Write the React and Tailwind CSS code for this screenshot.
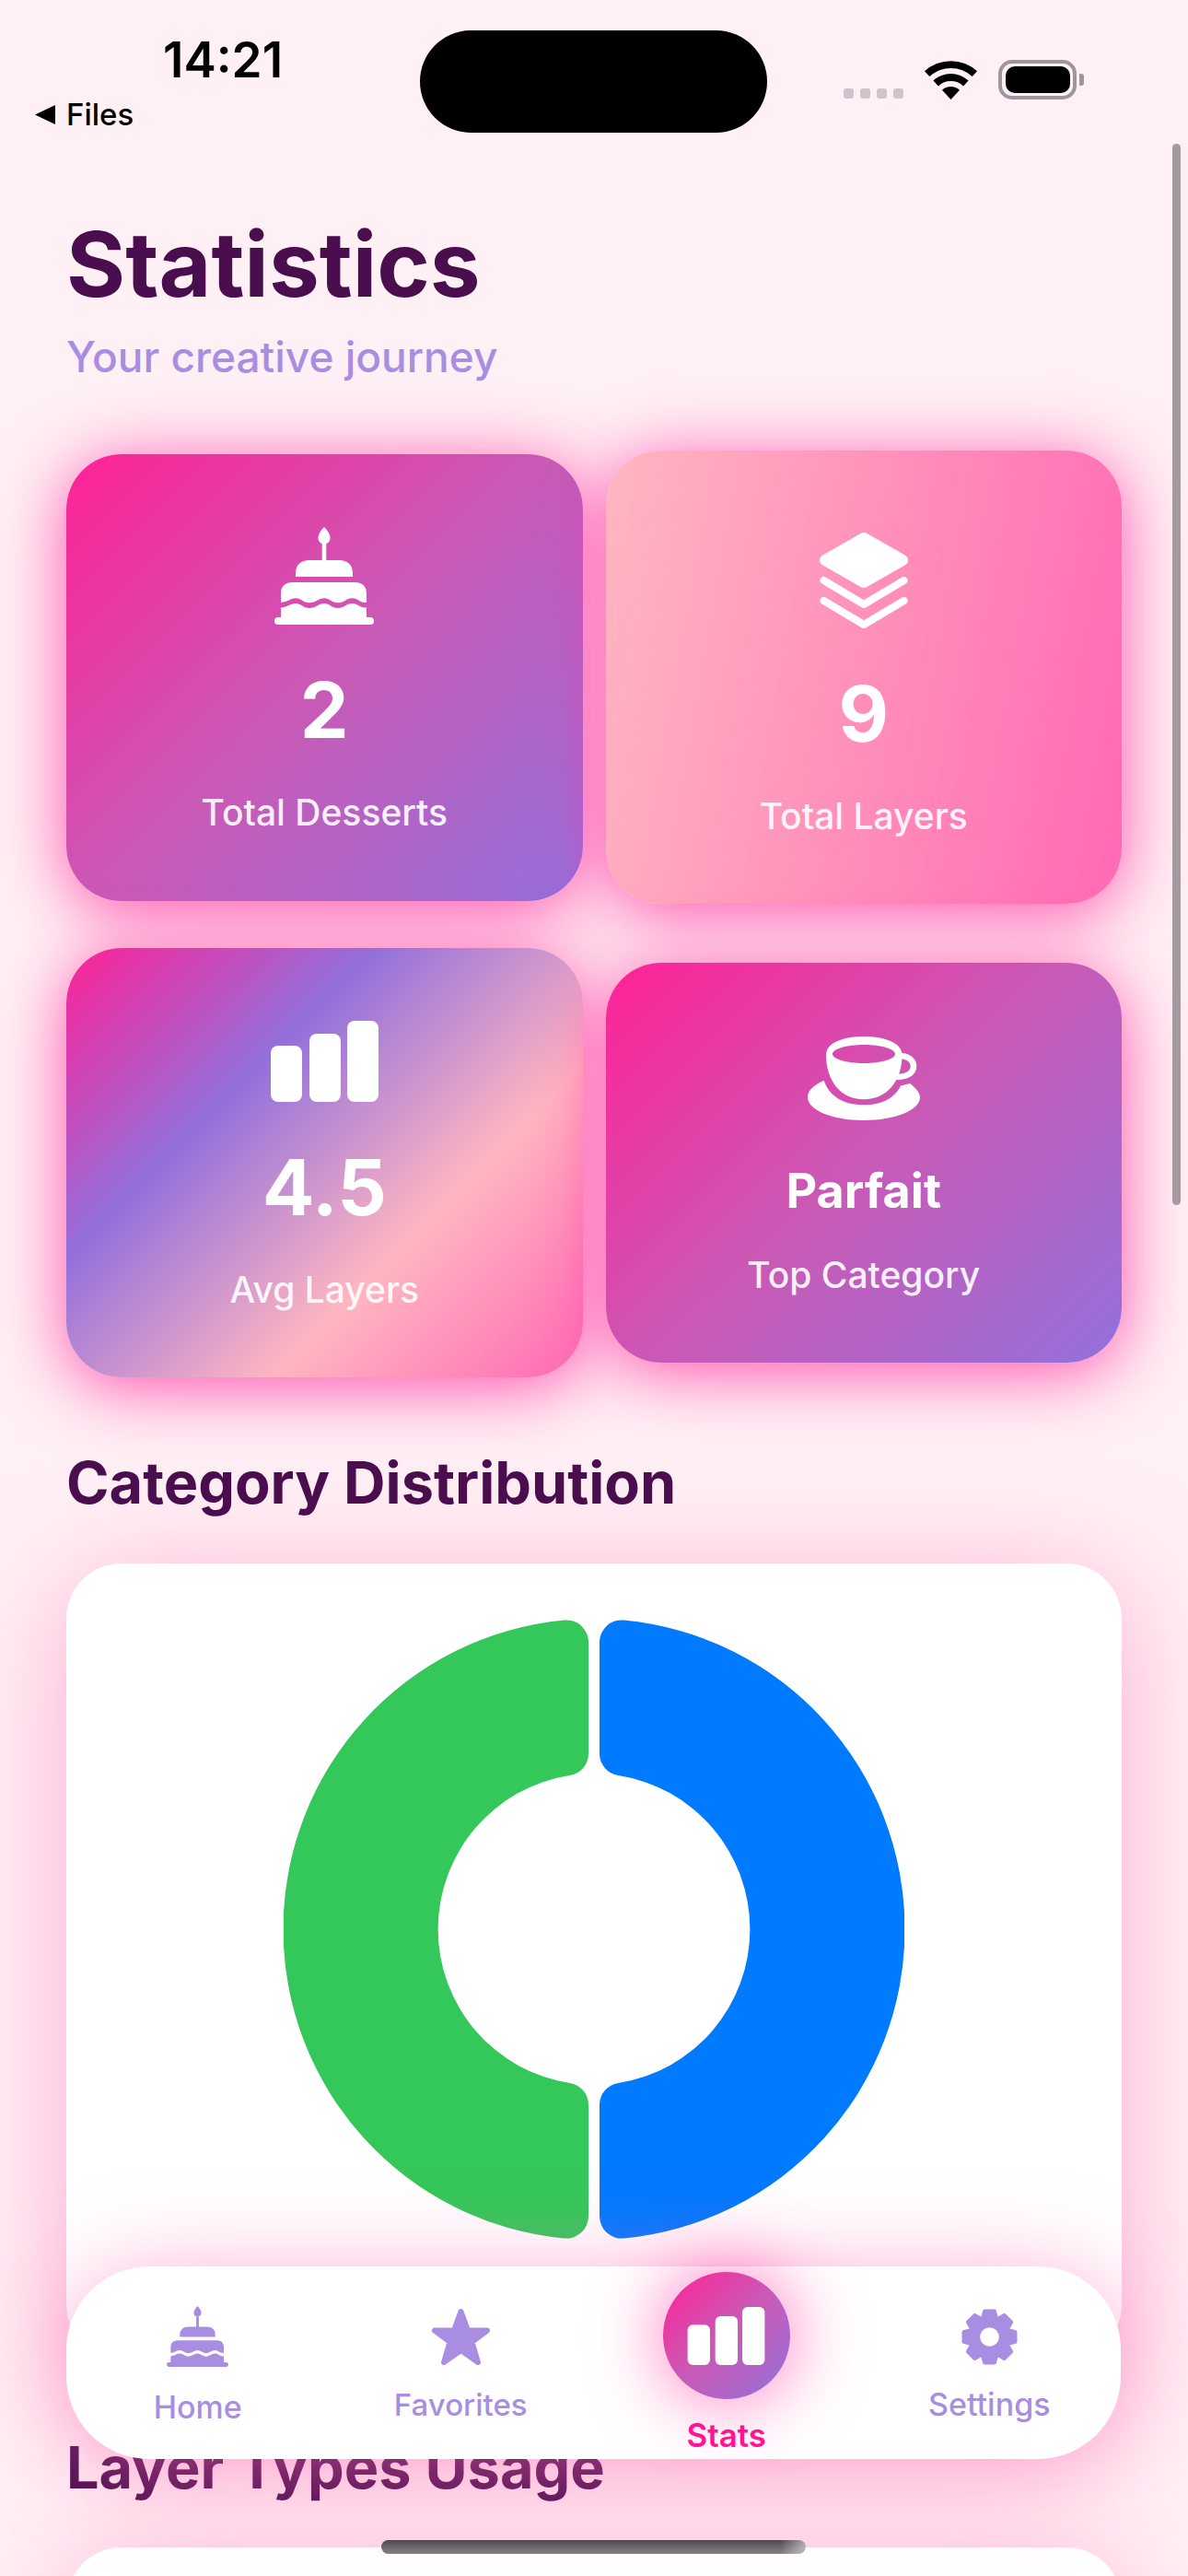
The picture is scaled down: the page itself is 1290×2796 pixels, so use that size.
const stats = [
  {
    label: "Total Desserts",
    value: "2",
    icon: <CakeIcon className="h-[106px] w-[108px] text-white" />,
    card: "h-[485px] self-center pt-[79px] bg-[linear-gradient(135deg,#FF2296,#C95AB6_50%,#9370DB)]",
    valueClass: "mt-[42px] text-[84px] leading-[102px] font-bold",
  },
  {
    label: "Total Layers",
    value: "9",
    icon: <LayersIcon />,
    card: "h-[492px] pt-[89px] bg-[linear-gradient(100deg,#FFB6C1,#FF69B4)]",
    valueClass: "mt-[42px] text-[84px] leading-[102px] font-bold",
  },
  {
    label: "Avg Layers",
    value: "4.5",
    icon: <BarsIcon className="h-[88px] w-[117px] text-white" />,
    card: "h-[466px] pt-[79px] bg-[linear-gradient(135deg,#FF2296,#9370DB_33%,#FFB6C1_67%,#FF69B4)]",
    valueClass: "mt-[42px] text-[84px] leading-[102px] font-bold",
  },
  {
    label: "Top Category",
    value: "Parfait",
    icon: <CupIcon />,
    card: "h-[434px] self-center pt-[80px] bg-[linear-gradient(135deg,#FF2296,#C95AB6_50%,#9370DB)]",
    valueClass: "mt-[45px] text-[52px] leading-[63px] font-bold",
  },
];

function CakeIcon({ className }) {
  return (
    <svg viewBox="0 0 108 106" className={className} fill="currentColor">
      <path d="M54 0C58 4 60.5 8 60.5 12C60.5 16 57.5 18.5 54 18.5C50.5 18.5 47.5 16 47.5 12C47.5 8 50 4 54 0Z" />
      <rect x="51.7" y="18" width="4.6" height="19" />
      <path d="M23 54V50C23 41 29 36 38 36H70C79 36 85 41 85 50V54Z" />
      <path d="M7 82V72C7 64 12 60 20 60H87C95 60 100 64 100 72V82C92 82.5 91 77.3 84.5 77.3C78 77.3 76 82.3 69 82.3C62 82.3 60 77.3 54 77.3C48 77.3 45 82.3 38 82.3C31 82.3 29 77.3 23 77.3C17 77.3 15 81.5 7 82Z" />
      <path d="M7 98V87.5C15 87 17 83 23 83C29 83 31 88 38 88C45 88 48 83 54 83C60 83 62 88 69 88C76 88 78 83 84.5 83C91 83 92 88 100 87.5V98Z" />
      <rect x="0" y="98" width="108" height="8" rx="4" />
    </svg>
  );
}

function LayersIcon() {
  return (
    <svg viewBox="0 0 96 104" className="h-[104px] w-[96px] text-white" fill="none" stroke="currentColor" strokeLinecap="round" strokeLinejoin="round">
      <polygon points="6,30 48,6 90,30 48,54" fill="currentColor" strokeWidth="12" />
      <polyline points="4.5,52 48,78 91.5,52" strokeWidth="8" />
      <polyline points="4.5,74 48,100 91.5,74" strokeWidth="8" />
    </svg>
  );
}

function BarsIcon({ className }) {
  return (
    <svg viewBox="0 0 117 88" className={className} fill="currentColor">
      <rect x="0" y="27" width="34" height="61" rx="8" />
      <rect x="42" y="14" width="34" height="74" rx="8" />
      <rect x="83" y="0" width="34" height="88" rx="8" />
    </svg>
  );
}

function CupIcon() {
  return (
    <svg viewBox="0 0 122 91" className="h-[91px] w-[122px] text-white" fill="currentColor">
      <path
        fillRule="evenodd"
        d="M20 20C20 7 38 0 61 0C84 0 102.6 7 102.6 20C102.6 48 86 68.3 61 68.3C36 68.3 20 48 20 20ZM27 19C27 24.5 42 29 61 29C80 29 95 24.5 95 19C95 13.5 80 9 61 9C42 9 27 13.5 27 19Z"
      />
      <path d="M100 21C108 21 115 25 115 32C115 40 107 44 96 44" fill="none" stroke="currentColor" strokeWidth="6.6" />
      <path d="M17.6 47.7C4 54 0 60 0 66C0 80 27 91 61 91C95 91 122 80 122 66C122 60 116 55 111 51L101 53.5C95 66 82 74.3 61 74.3C38 74.3 23 64 17.6 47.7Z" />
    </svg>
  );
}

function StarIcon() {
  return (
    <svg viewBox="0 0 65 63" className="h-[63px] w-[65px]" fill="currentColor" stroke="currentColor" strokeWidth="6" strokeLinejoin="round">
      <polygon points="32.5,4 40,24.5 61,24.5 44.5,37 51,59 32.5,46 14,59 20.5,37 4,24.5 25,24.5" />
    </svg>
  );
}

// eight rounded teeth around a root circle
const gearPoints = Array.from({ length: 8 }, (_, i) => {
  const a = (i * Math.PI) / 4 - Math.PI / 2;
  const pt = (r, d) => `${30.5 + r * Math.cos(a + d)},${30.5 + r * Math.sin(a + d)}`;
  return [pt(22, -0.34), pt(28.5, -0.19), pt(28.5, 0.19), pt(22, 0.34)].join(" ");
}).join(" ");

function GearIcon() {
  return (
    <svg viewBox="0 0 61 61" className="h-[61px] w-[61px]" fill="currentColor" stroke="currentColor" strokeWidth="4" strokeLinejoin="round">
      <polygon points={gearPoints} />
      <circle cx="30.5" cy="30.5" r="10.3" fill="#fff" stroke="none" />
    </svg>
  );
}

function WifiIcon() {
  return (
    <svg viewBox="0 0 57 42" className="h-[42px] w-[57px]" fill="#000">
      <path d="M0 11.3A42 42 0 0 1 57 11.3L51.7 17.1A34 34 0 0 0 5.3 17.1Z" />
      <path d="M9.4 21.5A28 28 0 0 1 47.6 21.5L42.1 27.4A20 20 0 0 0 14.9 27.4Z" />
      <path d="M19 31.8A14 14 0 0 1 38 31.8L28.5 42Z" />
    </svg>
  );
}

// half ring with rounded corners, centred on the origin
const sector =
  "M6 -311.6A24 24 0 0 1 32.3 -335.5A337 337 0 0 1 32.3 335.5A24 24 0 0 1 6 311.6L6 190.7A24 24 0 0 1 26.3 167A169 169 0 0 0 26.3 -167A24 24 0 0 1 6 -190.7Z";

function Donut() {
  return (
    <svg viewBox="-337 -337 674 674" className="h-[674px] w-[674px]">
      <path d={sector} fill="#007AFF" />
      <path d={sector} fill="#34C759" transform="scale(-1 1)" />
    </svg>
  );
}

function StatusBar() {
  return (
    <div className="absolute inset-x-0 top-0 z-20 flex items-start pt-[33px]">
      <div className="w-[456px] pl-[38px] pt-[2px] text-black">
        <div className="ml-[139px] text-[53px] leading-[60px] font-semibold">14:21</div>
        <div className="mt-[11px] flex items-center gap-[12px] text-[33px] leading-[36px] font-medium">
          <svg viewBox="0 0 22 21" className="h-[21px] w-[22px]" fill="#000">
            <path d="M0 10.5L22 0V21Z" />
          </svg>
          Files
        </div>
      </div>
      <div className="h-[111px] w-[377px] rounded-[56px] bg-black" />
      <div className="ml-[83px] mt-[32px] flex h-[43px] items-end">
        <div className="mb-px flex gap-[7px]">
          {[0, 1, 2, 3].map((i) => (
            <span key={i} className="h-[11px] w-[11px] rounded-[3px] bg-[#cfc4cb]" />
          ))}
        </div>
        <div className="ml-[23px]">
          <WifiIcon />
        </div>
        <div className="ml-[23px] flex items-center gap-[3px]">
          <div className="flex h-[43px] w-[85px] items-center justify-center rounded-[15px] border-[4px] border-[#a0959c]">
            <div className="h-[29px] w-[70px] rounded-[10px] bg-black" />
          </div>
          <div className="h-[13px] w-[5px] rounded-r-[3px] bg-[#a0959c]" />
        </div>
      </div>
    </div>
  );
}

function TabItem({ icon, label, className }) {
  return (
    <div className="flex flex-1 flex-col items-center justify-center pt-[5px] text-[#A98DE2]">
      {icon}
      <span className={`leading-[39px] font-medium ${className}`}>{label}</span>
    </div>
  );
}

function TabBar() {
  return (
    <div className="absolute left-[72px] top-[2460px] z-10 flex h-[209px] w-[1145px] rounded-[90px] bg-white shadow-[0_12px_100px_rgba(255,105,180,0.6)]">
      <TabItem icon={<CakeIcon className="h-[66px] w-[67px]" />} label="Home" className="mt-[24px] text-[34px]" />
      <TabItem icon={<StarIcon />} label="Favorites" className="mt-[23px] text-[33px]" />
      <div className="ml-[3px] flex flex-1 flex-col items-center justify-center">
        <div className="flex h-[138px] w-[138px] items-center justify-center rounded-full bg-[linear-gradient(135deg,#FF2296,#C95AB6_50%,#9370DB)] shadow-[0_0_80px_rgba(255,20,147,0.6)]">
          <BarsIcon className="h-[63px] w-[85px] text-white" />
        </div>
        <span className="mt-[20px] text-[35px] leading-[39px] font-semibold text-[#FF1493]">Stats</span>
      </div>
      <TabItem icon={<GearIcon />} label="Settings" className="mt-[23px] text-[34px]" />
    </div>
  );
}

export default function App() {
  return (
    <div className="relative h-[2796px] w-[1290px] overflow-hidden bg-[#FFF0F5] [font-family:Inter,sans-serif]">
      <StatusBar />

      <main className="px-[72px] pt-[229px]">
        <h1 className="text-[98px] leading-[116px] font-bold text-[#4A0E4E]">Statistics</h1>
        <p className="mt-[16px] text-[46px] leading-[53px] font-medium text-[#A98DE2]">Your creative journey</p>

        <div className="mt-[75px] grid grid-cols-2 gap-x-[25px] gap-y-[48px]">
          {stats.map((s) => (
            <div
              key={s.label}
              className={`flex flex-col items-center rounded-[60px] text-white shadow-[0_10px_75px_rgba(255,50,160,0.85)] ${s.card}`}
            >
              {s.icon}
              <div className={s.valueClass}>{s.value}</div>
              <div className="mt-[37px] text-[39px] leading-[46px] font-medium opacity-90">{s.label}</div>
            </div>
          ))}
        </div>

        <h2 className="mt-[76px] text-[63px] leading-[77px] font-bold text-[#4A0E4E]">Category Distribution</h2>
        <div className="mt-[49px] flex h-[864px] justify-center rounded-[60px] bg-white pt-[60px] shadow-[0_20px_120px_rgba(255,105,180,0.5)]">
          <Donut />
        </div>

        <h2 className="mt-[79px] text-[63px] leading-[77px] font-bold text-[#4A0E4E]">Layer Types Usage</h2>
        <div className="mt-[48px] h-[600px] rounded-[60px] bg-white shadow-[0_20px_120px_rgba(255,105,180,0.5)]" />
      </main>

      <TabBar />

      {/* scroll indicator and home bar */}
      <div className="absolute left-[1273px] top-[156px] z-20 h-[1152px] w-[9px] rounded-full bg-[#a49ba0]" />
      <div className="absolute left-[414px] top-[2757px] z-20 h-[15px] w-[461px] rounded-full bg-[linear-gradient(to_right,transparent_94%,rgba(255,255,255,0.5)),linear-gradient(#4f474d,#878287)]" />
    </div>
  );
}
